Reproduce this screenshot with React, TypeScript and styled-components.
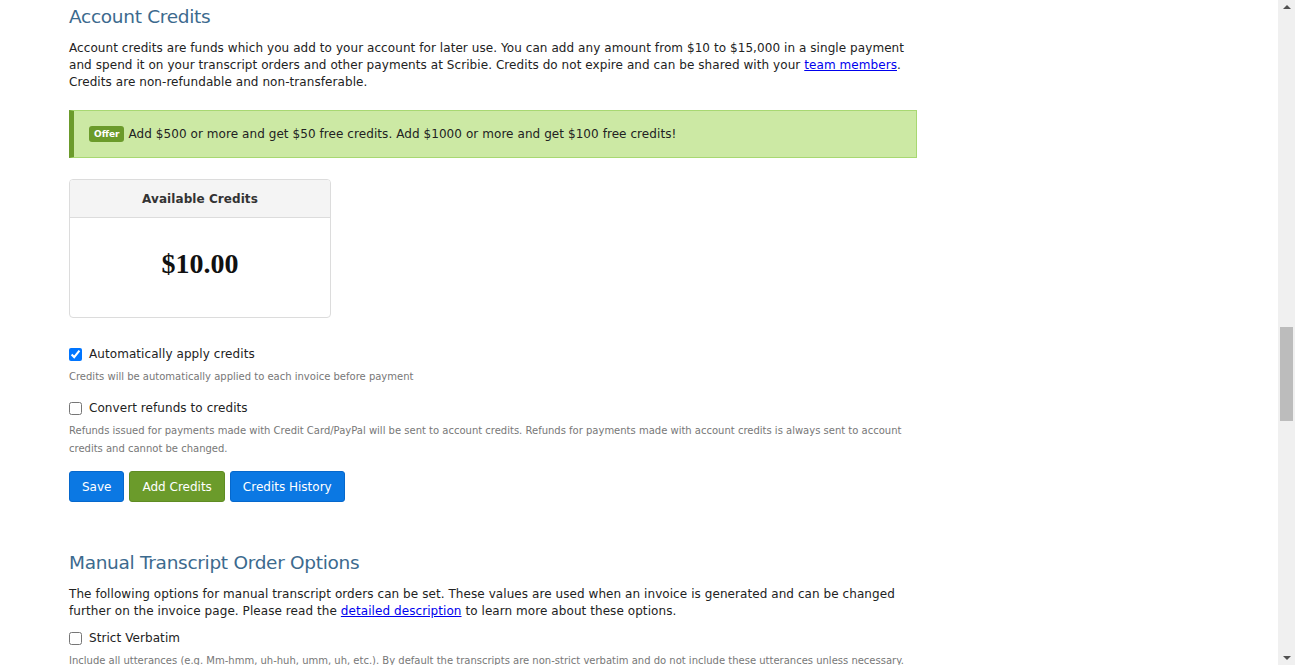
import React, {useState} from 'react';
import styled, {createGlobalStyle} from 'styled-components';

const GlobalStyle = createGlobalStyle`
  html, body {
    margin: 0;
    padding: 0;
    background: #fff;
    overflow: hidden;
  }
  body {
    font-family: "DejaVu Sans", Verdana, sans-serif;
    font-size: 12px;
    letter-spacing: 0.07px;
    color: #222;
  }
`

const Screen = styled.div`
  display: flex;
  height: 665px;
  overflow: hidden;
`

const Main = styled.div`
  flex: 1;
  padding: 0 0 0 69px;
`

const Content = styled.div`
  width: 848px;
`

const Heading = styled.h2<{top: number}>`
  margin: ${p => p.top}px 0 0;
  font-size: 18.5px;
  letter-spacing: -0.3px;
  font-weight: normal;
  color: #3c6a8e;
  line-height: 24px;
`

const Paragraph = styled.p`
  margin: 11px 0 0;
  line-height: 17px;
`

const TextLink = styled.a`
  color: #0000ee;
  text-decoration: underline;
`

const Offer = styled.div`
  margin-top: 19px;
  height: 48px;
  box-sizing: border-box;
  display: flex;
  align-items: center;
  gap: 4px;
  padding-left: 15px;
  background: #cce9a4;
  border: 1px solid #a8d872;
  border-left: 5px solid #6b9b2b;
`

const Badge = styled.span`
  background: #6b9b2b;
  color: #fff;
  font-weight: bold;
  font-size: 9px;
  letter-spacing: 0;
  padding: 2px 5px;
  border-radius: 3px;
  line-height: 12px;
`

const Card = styled.div`
  margin-top: 21px;
  width: 262px;
  height: 139px;
  box-sizing: border-box;
  border: 1px solid #dcdcdc;
  border-radius: 4px;
  display: flex;
  flex-direction: column;
  overflow: hidden;
`

const CardHeader = styled.div`
  height: 37px;
  background: #f4f4f4;
  border-bottom: 1px solid #dcdcdc;
  display: flex;
  align-items: center;
  justify-content: center;
  font-weight: bold;
  color: #333;
`

const CardBody = styled.div`
  flex: 1;
  display: flex;
  align-items: center;
  justify-content: center;
  font-family: "Liberation Serif", "Times New Roman", serif;
  font-weight: bold;
  font-size: 28px;
  letter-spacing: 0;
  color: #111;
  padding-bottom: 8px;
`

const Option = styled.label<{top: number}>`
  margin-top: ${p => p.top}px;
  display: flex;
  align-items: center;
  gap: 7px;
  line-height: 18px;
`

const Box = styled.input`
  margin: 0;
  width: 13px;
  height: 13px;
  accent-color: #0075ff;
`

const Help = styled.div`
  margin-top: 5px;
  font-size: 10px;
  letter-spacing: 0;
  line-height: 18px;
  color: #777;
`

const Buttons = styled.div`
  margin-top: 13px;
  display: flex;
  gap: 5px;
`

const Button = styled.button<{green?: boolean}>`
  height: 31px;
  padding: 0 12px;
  border: 1px solid ${p => p.green ? '#5f8c23' : '#0668cc'};
  border-radius: 3px;
  background: ${p => p.green ? '#6b9b2b' : '#0b78e3'};
  color: #fff;
  font-family: inherit;
  font-size: 12px;
  letter-spacing: 0;
`

const Scrollbar = styled.div`
  width: 17px;
  background: #f0f0f0;
  display: flex;
  flex-direction: column;
  align-items: center;
`

const Arrow = styled.div<{down?: boolean}>`
  width: 0;
  height: 0;
  margin: ${p => p.down ? 'auto 0 5px' : '5px 0 0'};
  border-left: 4px solid transparent;
  border-right: 4px solid transparent;
  ${p => p.down ? 'border-top: 4px solid #505050;' : 'border-bottom: 4px solid #505050;'}
`

const Thumb = styled.div`
  margin-top: 318px;
  width: 13px;
  height: 94px;
  background: #bcbcbc;
`

export default function App() {
    const [autoApply, setAutoApply] = useState(true);
    const [refunds, setRefunds] = useState(false);
    const [verbatim, setVerbatim] = useState(false);

    return (
        <Screen>
            <GlobalStyle/>
            <Main>
                <Content>
                    <Heading top={5}>Account Credits</Heading>
                    <Paragraph>
                        Account credits are funds which you add to your account for later use. You can add any amount from $10 to $15,000 in a single payment
                        and spend it on your transcript orders and other payments at Scribie. Credits do not expire and can be shared with your <TextLink href="#">team members</TextLink>.
                        Credits are non-refundable and non-transferable.
                    </Paragraph>
                    <Offer>
                        <Badge>Offer</Badge>
                        Add $500 or more and get $50 free credits. Add $1000 or more and get $100 free credits!
                    </Offer>
                    <Card>
                        <CardHeader>Available Credits</CardHeader>
                        <CardBody>$10.00</CardBody>
                    </Card>
                    <Option top={27}>
                        <Box type="checkbox" checked={autoApply} onChange={() => setAutoApply(!autoApply)}/>
                        Automatically apply credits
                    </Option>
                    <Help>Credits will be automatically applied to each invoice before payment</Help>
                    <Option top={13}>
                        <Box type="checkbox" checked={refunds} onChange={() => setRefunds(!refunds)}/>
                        Convert refunds to credits
                    </Option>
                    <Help>
                        Refunds issued for payments made with Credit Card/PayPal will be sent to account credits. Refunds for payments made with account credits is always sent to account
                        credits and cannot be changed.
                    </Help>
                    <Buttons>
                        <Button>Save</Button>
                        <Button green>Add Credits</Button>
                        <Button>Credits History</Button>
                    </Buttons>
                    <Heading top={49}>Manual Transcript Order Options</Heading>
                    <Paragraph>
                        The following options for manual transcript orders can be set. These values are used when an invoice is generated and can be changed
                        further on the invoice page. Please read the <TextLink href="#">detailed description</TextLink> to learn more about these options.
                    </Paragraph>
                    <Option top={9}>
                        <Box type="checkbox" checked={verbatim} onChange={() => setVerbatim(!verbatim)}/>
                        Strict Verbatim
                    </Option>
                    <Help>
                        Include all utterances (e.g. Mm-hmm, uh-huh, umm, uh, etc.). By default the transcripts are non-strict verbatim and do not include these utterances unless necessary.
                    </Help>
                </Content>
            </Main>
            <Scrollbar>
                <Arrow/>
                <Thumb/>
                <Arrow down/>
            </Scrollbar>
        </Screen>
    );
}
